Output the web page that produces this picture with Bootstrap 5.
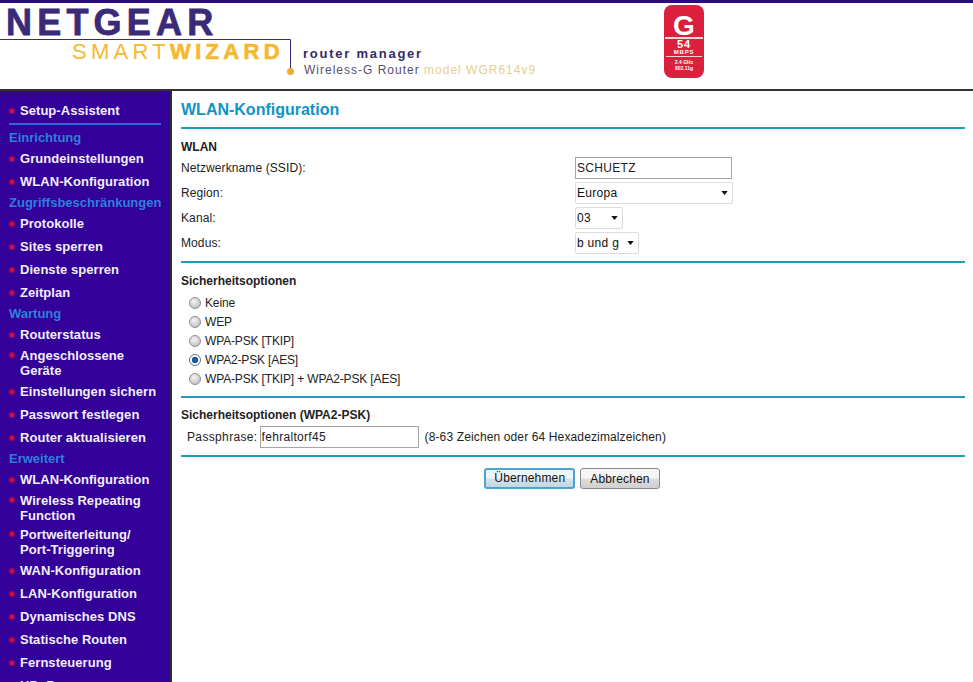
<!DOCTYPE html>
<html lang="de">
<head>
  <meta charset="UTF-8" />
  <title>NETGEAR Router WGR614v9</title>
  <link rel="stylesheet" href="https://cdn.jsdelivr.net/npm/bootstrap@5.3.3/dist/css/bootstrap.min.css"/>
  <style>
    html, body { height: 100%; overflow: hidden; }
    body { font-family: "Liberation Sans", Arial, sans-serif; font-size: 12px; color: #222; background: #fff; }

    /* header */
    .top-head { height: 91px; border-top: 3px solid #2a0a80; border-bottom: 2px solid #333; position: relative; flex: none; }
    .logo-net { position: absolute; left: 6px; top: 6px; font-size: 36px; line-height: 28px; font-weight: 700; letter-spacing: 5.2px; color: #3a2a78; -webkit-text-stroke: .8px #3a2a78; }
    .logo-lines { position: absolute; left: 0; top: 0; }
    .logo-smart { position: absolute; left: 72px; top: 39px; font-size: 22px; line-height: 20px; letter-spacing: 4.3px; color: #f4b930; white-space: nowrap; }
    .logo-smart b { letter-spacing: 4.3px; font-weight: 700; -webkit-text-stroke: .7px #f4b930; }
    .logo-mgr { position: absolute; left: 303px; top: 43px; font-size: 13px; line-height: 16px; font-weight: 700; letter-spacing: 1.75px; color: #352a66; }
    .logo-model { position: absolute; left: 304px; top: 60px; font-size: 12px; line-height: 15px; letter-spacing: 1px; color: #55506c; }
    .logo-model span { color: #e6cf8e; }
    .g-badge { position: absolute; left: 664px; top: 2px; width: 40px; height: 73px; background: #dc1f3c; border-radius: 8px; color: #fff; text-align: center; font-weight: 700; }
    .g-big { font-size: 28px; line-height: 22px; padding-top: 10px; border-bottom: 2px solid #f6d5da; margin: 0 1px; height: 34px; }
    .g-num { font-size: 11px; line-height: 9px; letter-spacing: 1px; padding-top: 1px; }
    .g-mb { font-size: 6px; line-height: 6px; letter-spacing: .8px; border-bottom: 1px solid #f6d5da; margin: 0 2px; padding-bottom: 1px; }
    .g-small { font-size: 5px; line-height: 6px; padding-top: 2px; }

    /* sidebar */
    .side-nav { width: 170px; flex: none; background: #330099; padding: 8px 9px 0; overflow: hidden; }
    .nav-row { display: flex; align-items: center; min-height: 23px; padding: 2px 0; line-height: 15px; font-size: 13px; font-weight: 700; color: #f2effa; text-decoration: none; letter-spacing: .05px; }
    .nav-row::before { content: ""; flex: none; width: 4px; height: 4px; margin: 0 6px 0 1px; border-radius: 50%; background: #d0103c; box-shadow: 0 0 2px 1px #a0105c; }
    .nav-row.two-line { align-items: flex-start; }
    .nav-row.two-line::before { margin-top: 5px; }
    .nav-head { height: 19px; line-height: 19px; font-size: 13px; font-weight: 700; color: #2f7fdc; white-space: nowrap; }
    .nav-rule { height: 2px; background: #3366dd; margin: 1px 0 3px; }

    /* content */
    .main-pane { flex: 1; border-left: 2px solid #2a2a3a; padding: 9px 8px 0 9px; min-width: 0; }
    .page-title { font-size: 16px; line-height: 20px; font-weight: 700; color: #0f93c4; margin: 0; padding-bottom: 7px; }
    .blue-rule { height: 2px; background: #1f9bbd; }
    .rule-a { margin-bottom: 11px; }
    .rule-b { margin-top: 6px; margin-bottom: 11px; }
    .rule-c { margin-top: 8px; margin-bottom: 10px; }
    .rule-d { margin-top: 5px; }
    .sec-title { font-size: 12px; line-height: 15px; font-weight: 700; margin: 0; }
    .form-line { display: flex; align-items: center; height: 25px; letter-spacing: .1px; }
    .form-lbl { width: 394px; flex: none; }
    .pass-line { height: 27px; padding-left: 6px; }
    .pass-lbl { letter-spacing: .35px; margin-right: 2px; }
    .pass-hint { margin-left: 6px; letter-spacing: .13px; }
    .wr-input.form-control { height: 22px; border-radius: 0; border: 1px solid #a5a5a5; padding: 0 1px; font-size: 12px; color: #222; letter-spacing: .3px; box-shadow: none; }
    .wr-select.form-select { height: 22px; border-radius: 2px; border: 1px solid #dcdcdc; padding: 0 1px; font-size: 12px; color: #111; letter-spacing: .3px;
      background-size: 7px 4px; background-position: right 4px center;
      background-image: url("data:image/svg+xml,%3csvg xmlns='http://www.w3.org/2000/svg' viewBox='0 0 8 5'%3e%3cpath d='M0 0h8L4 5z' fill='%23111'/%3e%3c/svg%3e"); }
    .radio-line { display: flex; align-items: center; height: 19px; padding-left: 8px; letter-spacing: -.15px; margin: 0; }
    .wr-radio { appearance: none; width: 12px; height: 12px; margin: 0 4px 0 0; border-radius: 50%; border: 1px solid #8f8f8f; background: radial-gradient(circle at 40% 35%, #f4f4f4, #b4b4b4); }
    .wr-radio:checked { border-color: #5a7590; background: radial-gradient(circle, #1d5f9c 0 3px, #fff 3.6px); }
    .wr-btn.btn { height: 21px; padding: 0 9px; font-size: 12px; line-height: 18px; letter-spacing: .15px; color: #111; border: 1px solid #8a8a8a; border-radius: 3px; background: linear-gradient(#f6f6f6 0 45%, #dcdcdc 55%, #cfcfcf); }
    .wr-btn.wr-default { padding: 0 8px; border: 2px solid #4ca3d0; line-height: 17px; background: linear-gradient(#eef5f9 0 45%, #d3e3ec 55%, #c3d6e2); }
    .btn-row { gap: 5px; margin-top: 11px; padding-right: 2px; }
  </style>
</head>
<body class="d-flex flex-column">

  <!-- Logo bar -->
  <header class="top-head">
    <div class="logo-net">NETGEAR</div>
    <svg class="logo-lines" width="300" height="80">
      <path d="M0 36.5H290.5V67" fill="none" stroke="#3a2a78" stroke-width="1"/>
      <circle cx="290.5" cy="68.5" r="3.5" fill="#f0ac30"/>
    </svg>
    <div class="logo-smart">SMART<b>WIZARD</b></div>
    <div class="logo-mgr">router manager</div>
    <div class="logo-model">Wireless-G Router <span>model WGR614v9</span></div>
    <div class="g-badge">
      <div class="g-big">G</div>
      <div class="g-num">54</div>
      <div class="g-mb">MBPS</div>
      <div class="g-small">2.4 GHz<br>802.11g</div>
    </div>
  </header>

  <div class="d-flex flex-grow-1 overflow-hidden">
    <!-- Menu -->
    <nav class="side-nav">
      <a class="nav-row" href="#">Setup-Assistent</a>
      <div class="nav-rule"></div>
      <div class="nav-head">Einrichtung</div>
      <a class="nav-row" href="#">Grundeinstellungen</a>
      <a class="nav-row" href="#">WLAN-Konfiguration</a>
      <div class="nav-head">Zugriffsbeschränkungen</div>
      <a class="nav-row" href="#">Protokolle</a>
      <a class="nav-row" href="#">Sites sperren</a>
      <a class="nav-row" href="#">Dienste sperren</a>
      <a class="nav-row" href="#">Zeitplan</a>
      <div class="nav-head">Wartung</div>
      <a class="nav-row" href="#">Routerstatus</a>
      <a class="nav-row two-line" href="#">Angeschlossene<br>Geräte</a>
      <a class="nav-row" href="#">Einstellungen sichern</a>
      <a class="nav-row" href="#">Passwort festlegen</a>
      <a class="nav-row" href="#">Router aktualisieren</a>
      <div class="nav-head">Erweitert</div>
      <a class="nav-row" href="#">WLAN-Konfiguration</a>
      <a class="nav-row two-line" href="#">Wireless Repeating<br>Function</a>
      <a class="nav-row two-line" href="#">Portweiterleitung/<br>Port-Triggering</a>
      <a class="nav-row" href="#">WAN-Konfiguration</a>
      <a class="nav-row" href="#">LAN-Konfiguration</a>
      <a class="nav-row" href="#">Dynamisches DNS</a>
      <a class="nav-row" href="#">Statische Routen</a>
      <a class="nav-row" href="#">Fernsteuerung</a>
      <a class="nav-row" href="#">UPnP</a>
    </nav>

    <!-- Settings form -->
    <main class="main-pane">
      <h1 class="page-title">WLAN-Konfiguration</h1>
      <div class="blue-rule rule-a"></div>

      <h2 class="sec-title">WLAN</h2>
      <div class="form-line">
        <span class="form-lbl">Netzwerkname (SSID):</span>
        <input class="form-control wr-input" style="width:157px" type="text" value="SCHUETZ">
      </div>
      <div class="form-line">
        <span class="form-lbl">Region:</span>
        <select class="form-select wr-select" style="width:158px"><option>Europa</option></select>
      </div>
      <div class="form-line">
        <span class="form-lbl">Kanal:</span>
        <select class="form-select wr-select" style="width:48px"><option>03</option></select>
      </div>
      <div class="form-line">
        <span class="form-lbl">Modus:</span>
        <select class="form-select wr-select" style="width:64px"><option>b und g</option></select>
      </div>
      <div class="blue-rule rule-b"></div>

      <h2 class="sec-title mb-1">Sicherheitsoptionen</h2>
      <label class="radio-line"><input class="wr-radio" type="radio" name="sec">Keine</label>
      <label class="radio-line"><input class="wr-radio" type="radio" name="sec">WEP</label>
      <label class="radio-line"><input class="wr-radio" type="radio" name="sec">WPA-PSK [TKIP]</label>
      <label class="radio-line"><input class="wr-radio" type="radio" name="sec" checked>WPA2-PSK [AES]</label>
      <label class="radio-line"><input class="wr-radio" type="radio" name="sec">WPA-PSK [TKIP] + WPA2-PSK [AES]</label>
      <div class="blue-rule rule-c"></div>

      <h2 class="sec-title">Sicherheitsoptionen (WPA2-PSK)</h2>
      <div class="form-line pass-line">
        <span class="pass-lbl">Passphrase:</span>
        <input class="form-control wr-input" style="width:159px" type="text" value="fehraltorf45">
        <span class="pass-hint">(8-63 Zeichen oder 64 Hexadezimalzeichen)</span>
      </div>
      <div class="blue-rule rule-d"></div>

      <div class="d-flex justify-content-center btn-row">
        <button class="btn wr-btn wr-default" type="button">Übernehmen</button>
        <button class="btn wr-btn" type="button">Abbrechen</button>
      </div>
    </main>
  </div>

</body>
</html>
